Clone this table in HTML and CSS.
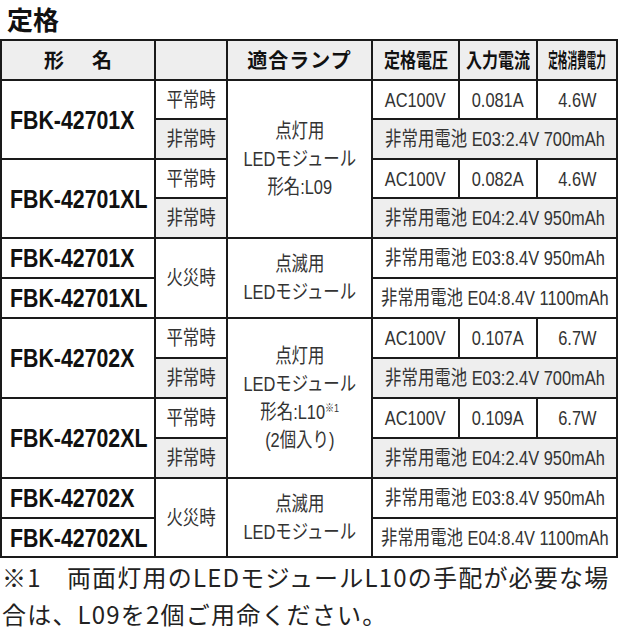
FILE: index.html
```html
<!DOCTYPE html>
<html lang="ja">
<head>
<meta charset="utf-8">
<title>定格</title>
<link rel="stylesheet" href="styles.css">
</head>
<body>
<h2 class="title">定格</h2>
<div class="spec">
  <div class="cell hd"><span class="h-name">形　名</span></div>
  <div class="cell hd"></div>
  <div class="cell hd"><span class="h-lamp">適合ランプ</span></div>
  <div class="cell hd"><span class="h-sq">定格電圧</span></div>
  <div class="cell hd"><span class="h-sq">入力電流</span></div>
  <div class="cell hd"><span class="h-sq2">定格消費電力</span></div>

  <div class="cell model r2"><span class="m">FBK-42701X</span></div>
  <div class="cell"><span class="t">平常時</span></div>
  <div class="cell r4"><span class="t lines">点灯用<br>LEDモジュール<br>形名:L09</span></div>
  <div class="cell"><span class="t">AC100V</span></div>
  <div class="cell"><span class="t">0.081A</span></div>
  <div class="cell"><span class="t">4.6W</span></div>
  <div class="cell g"><span class="t">非常時</span></div>
  <div class="cell g c3"><span class="t">非常用電池 E03:2.4V 700mAh</span></div>

  <div class="cell model r2"><span class="m">FBK-42701XL</span></div>
  <div class="cell"><span class="t">平常時</span></div>
  <div class="cell"><span class="t">AC100V</span></div>
  <div class="cell"><span class="t">0.082A</span></div>
  <div class="cell"><span class="t">4.6W</span></div>
  <div class="cell g"><span class="t">非常時</span></div>
  <div class="cell g c3"><span class="t">非常用電池 E04:2.4V 950mAh</span></div>

  <div class="cell model"><span class="m">FBK-42701X</span></div>
  <div class="cell r2"><span class="t">火災時</span></div>
  <div class="cell r2"><span class="t lines">点滅用<br>LEDモジュール</span></div>
  <div class="cell c3"><span class="t">非常用電池 E03:8.4V 950mAh</span></div>
  <div class="cell model"><span class="m">FBK-42701XL</span></div>
  <div class="cell c3"><span class="t">非常用電池 E04:8.4V 1100mAh</span></div>

  <div class="cell model r2"><span class="m">FBK-42702X</span></div>
  <div class="cell"><span class="t">平常時</span></div>
  <div class="cell r4"><span class="t lines">点灯用<br>LEDモジュール<br>形名:L10<sup>※1</sup><br>(2個入り)</span></div>
  <div class="cell"><span class="t">AC100V</span></div>
  <div class="cell"><span class="t">0.107A</span></div>
  <div class="cell"><span class="t">6.7W</span></div>
  <div class="cell g"><span class="t">非常時</span></div>
  <div class="cell g c3"><span class="t">非常用電池 E03:2.4V 700mAh</span></div>

  <div class="cell model r2"><span class="m">FBK-42702XL</span></div>
  <div class="cell"><span class="t">平常時</span></div>
  <div class="cell"><span class="t">AC100V</span></div>
  <div class="cell"><span class="t">0.109A</span></div>
  <div class="cell"><span class="t">6.7W</span></div>
  <div class="cell g"><span class="t">非常時</span></div>
  <div class="cell g c3"><span class="t">非常用電池 E04:2.4V 950mAh</span></div>

  <div class="cell model"><span class="m">FBK-42702X</span></div>
  <div class="cell r2"><span class="t">火災時</span></div>
  <div class="cell r2"><span class="t lines">点滅用<br>LEDモジュール</span></div>
  <div class="cell c3"><span class="t">非常用電池 E03:8.4V 950mAh</span></div>
  <div class="cell model"><span class="m">FBK-42702XL</span></div>
  <div class="cell c3"><span class="t">非常用電池 E04:8.4V 1100mAh</span></div>
</div>
<p class="note">※1　両面灯用のLEDモジュールL10の手配が必要な場合は、L09を2個ご用命ください。</p>
</body>
</html>
```

FILE: styles.css
```css
html, body {
  margin: 0;
  padding: 0;
  background: #fff;
}
body {
  width: 618px;
  font-family: "Noto Sans CJK JP", "Noto Sans", sans-serif;
  color: #222;
}
.title {
  margin: 0;
  height: 39px;
  box-sizing: border-box;
  padding: 4px 0 0 7px;
  font-size: 26px;
  line-height: 30px;
  font-weight: 700;
  color: #111;
}
.spec {
  display: grid;
  grid-template-columns: 154px 72px 145px 87px 78px 80px;
  grid-template-rows: 40px 39px 40px 39px 40px 40px 40px 40px 40px 40px 40px 40px 39px;
  border-left: 2px solid #1a1a1a;
  border-top: 2px solid #1a1a1a;
  width: 618px;
  box-sizing: border-box;
}
.cell {
  box-sizing: border-box;
  border-right: 2px solid #1a1a1a;
  border-bottom: 2px solid #1a1a1a;
  display: flex;
  align-items: center;
  justify-content: center;
  overflow: hidden;
  background: #fff;
}
.hd, .g {
  background: #eeeeee;
}
.r2 { grid-row: span 2; }
.r4 { grid-row: span 4; }
.c3 { grid-column: span 3; }

.hd span {
  display: inline-block;
  font-size: 20px;
  font-weight: 700;
  line-height: 24px;
  color: #111;
  white-space: nowrap;
}
.h-name { letter-spacing: 4px; padding-left: 4px; }
.h-lamp { letter-spacing: 1px; }
.hd .h-sq { transform: scaleX(.8); }
.hd .h-sq2 { transform: scaleX(.48); }

.t {
  display: inline-block;
  font-family: "Liberation Sans", "Noto Sans CJK JP", sans-serif;
  font-size: 20px;
  line-height: 24px;
  white-space: nowrap;
  text-align: center;
  transform: scaleX(.82);
  color: #333;
}
.lines { line-height: 28px; }
.t sup {
  font-size: 11px;
  line-height: 0;
  vertical-align: 7px;
}
.model {
  justify-content: flex-start;
  padding-left: 8px;
}
.m {
  display: inline-block;
  font-family: "Liberation Sans", Arial, sans-serif;
  font-weight: 700;
  font-size: 26px;
  line-height: 30px;
  white-space: nowrap;
  transform: scaleX(.82);
  transform-origin: left center;
  color: #111;
}
.note {
  margin: 0;
  padding: 0 0 0 2px;
  font-size: 24px;
  line-height: 37px;
  letter-spacing: 1.2px;
  color: #222;
}
```
